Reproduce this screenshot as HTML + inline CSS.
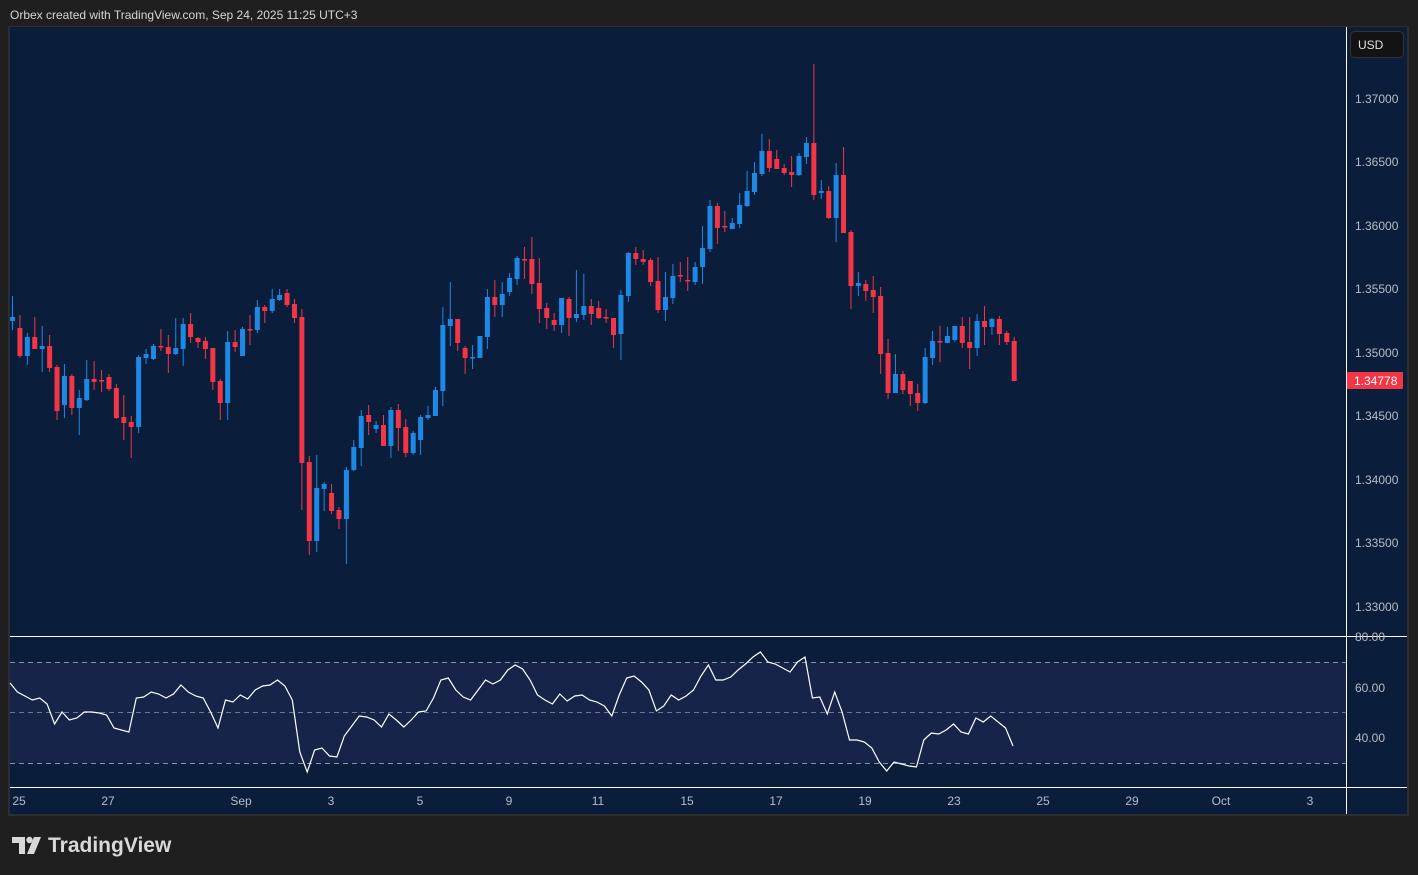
<!DOCTYPE html>
<html><head><meta charset="utf-8"><style>
html,body{margin:0;padding:0;background:#1f1f1f;width:1418px;height:875px;overflow:hidden;font-family:"Liberation Sans",sans-serif}
svg{position:absolute;left:0;top:0}
</style></head><body>
<svg id="s" width="1418" height="875" xmlns="http://www.w3.org/2000/svg">
<rect x="0" y="0" width="1418" height="875" fill="#1f1f1f"/>
<text x="10" y="19" fill="#d6d6d6" font-size="12" font-family="Liberation Sans, sans-serif">Orbex created with TradingView.com, Sep 24, 2025 11:25 UTC+3</text>
<rect x="8" y="26" width="1401" height="790" fill="#2a2d33"/>
<rect x="10" y="27" width="1397" height="787" fill="#0a1e3c"/>
<rect x="10" y="662" width="1336" height="101" fill="#16244a"/>
<line x1="10" y1="662.5" x2="1346" y2="662.5" stroke="#8a94a8" stroke-dasharray="5,4"/>
<line x1="10" y1="712.5" x2="1346" y2="712.5" stroke="#6c7790" stroke-dasharray="5,4"/>
<line x1="10" y1="763.5" x2="1346" y2="763.5" stroke="#8a94a8" stroke-dasharray="5,4"/>
<g id="c"></g>
<polyline id="rsi" fill="none" stroke="#ffffff" stroke-width="1.2" points=""/>
<line x1="10" y1="636.5" x2="1407" y2="636.5" stroke="#fff"/>
<line x1="10" y1="787.5" x2="1407" y2="787.5" stroke="#fff"/>
<line x1="1346.5" y1="27" x2="1346.5" y2="814" stroke="#fff"/>
<g fill="#b8bcc6" font-size="12" font-family="Liberation Sans, sans-serif">
<text x="1355" y="103">1.37000</text><text x="1355" y="166">1.36500</text><text x="1355" y="230">1.36000</text>
<text x="1355" y="293">1.35500</text><text x="1355" y="357">1.35000</text><text x="1355" y="420">1.34500</text>
<text x="1355" y="484">1.34000</text><text x="1355" y="547">1.33500</text><text x="1355" y="611">1.33000</text>
<text x="1355" y="641">80.00</text><text x="1355" y="692">60.00</text><text x="1355" y="742">40.00</text>
</g>
<g fill="#b8bcc6" font-size="12" text-anchor="middle" font-family="Liberation Sans, sans-serif">
<text x="19" y="805">25</text><text x="108" y="805">27</text><text x="241" y="805">Sep</text><text x="331" y="805">3</text>
<text x="420" y="805">5</text><text x="509" y="805">9</text><text x="598" y="805">11</text><text x="687" y="805">15</text>
<text x="776" y="805">17</text><text x="865" y="805">19</text><text x="954" y="805">23</text><text x="1043" y="805">25</text>
<text x="1132" y="805">29</text><text x="1221" y="805">Oct</text><text x="1310" y="805">3</text>
</g>
<rect x="1350.5" y="31.5" width="53" height="26" rx="4" fill="#131313" stroke="#333"/>
<text x="1358" y="49" fill="#e0e0e0" font-size="12" font-family="Liberation Sans, sans-serif">USD</text>
<rect x="1347" y="372" width="56" height="17" rx="1" fill="#f23645"/>
<text x="1354" y="385" fill="#fff" font-size="12" font-family="Liberation Sans, sans-serif">1.34778</text>
<g fill="#d9d9d9">
<path d="M12 837 H25 V854 H19 V843 H12 Z"/>
<circle cx="29.5" cy="840" r="3.2"/>
<path d="M34 837 H41 L34 854 H27 Z"/>
</g>
<text x="48" y="852" fill="#d9d9d9" font-size="21" font-weight="bold" font-family="Liberation Sans, sans-serif">TradingView</text>
</svg>
<script>
var d=[
[317,321,296,330,1],[328,356,315,358,0],[337,356,333,365,1],[337,349,317,349,0],[346,349,326,372,1],[346,368,335,372,0],[367,411,365,420,0],[376,405,364,418,1],[376,408,374,415,0],[398,408,390,435,1],
[379,400,360,401,1],[379,382,361,390,0],[380,381,370,392,0],[377,389,374,391,0],[388,418,384,419,0],[417,423,395,440,0],[422,427,416,458,0],[357,427,355,433,1],[354,358,349,364,1],[346,359,344,360,1],
[346,347,329,351,0],[347,354,335,373,0],[348,354,318,355,1],[324,349,318,366,1],[324,337,313,343,0],[338,342,337,348,0],[341,349,337,359,0],[348,382,348,390,0],[381,403,379,420,0],[342,403,331,420,1],
[342,347,330,352,0],[329,356,327,356,1],[329,330,315,345,0],[307,330,300,333,1],[307,311,305,323,0],[299,311,289,313,1],[295,300,289,301,1],[293,305,289,307,0],[304,318,299,323,0],[317,463,309,510,0],
[462,541,456,555,0],[488,541,455,552,1],[484,489,482,511,1],[493,511,484,514,0],[510,519,507,529,0],[470,519,467,564,1],
[447,470,440,471,1],[416,448,410,466,1],[415,422,405,435,0],[425,429,421,433,1],[425,446,415,446,0],[410,446,407,458,1],[410,428,404,451,0],[427,453,419,457,0],[433,453,431,455,1],[417,440,415,455,1],
[415,418,406,420,1],[390,416,387,416,1],[325,391,307,406,1],[319,326,282,346,1],[319,343,319,351,0],[348,358,346,374,0],[357,358,345,369,1],[336,358,336,358,1],[297,337,289,349,1],[297,305,280,317,0],
[294,305,282,317,1],[278,292,273,296,1],[258,279,256,285,1],[259,260,247,279,0],[259,284,237,294,0],[283,309,258,323,0],[308,318,303,329,0],[320,325,313,331,0],[298,325,298,333,1],[299,318,297,336,0],
[314,318,270,322,1],[306,315,274,320,1],[306,314,299,325,0],[308,318,301,319,0],[317,318,309,323,0],[318,335,318,348,0],[295,334,290,360,1],[253,296,252,302,1],[253,259,247,265,0],[259,262,250,265,0],
[260,282,258,286,0],[281,310,257,313,0],[297,310,272,321,1],[276,298,264,304,1],[275,276,262,282,0],[280,281,257,291,0],
[267,282,262,285,1],[248,267,226,284,1],[206,249,200,252,1],[206,228,203,244,0],[226,227,211,232,0],[223,229,218,229,1],[205,224,193,228,1],[191,206,171,207,1],[173,192,162,195,1],[151,174,134,176,1],
[151,168,139,172,0],[159,169,150,169,0],[168,173,164,175,0],[172,175,156,187,0],[156,175,153,176,1],[143,157,137,164,1],[143,195,64,200,0],[191,193,180,199,1],[191,218,186,219,0],[175,218,163,242,1],
[175,233,147,233,0],[232,286,230,309,0],[283,286,272,296,1],[284,291,280,301,0],[290,297,276,313,0],[296,354,287,374,0],[353,393,339,399,0],[374,393,354,393,1],[374,390,371,394,0],[381,394,381,406,0],
[393,403,384,411,0],[357,403,348,404,1],[341,358,331,365,1],[341,342,326,362,0],[336,343,327,343,1],[326,340,326,342,1],[326,343,317,348,0],[342,348,317,369,0],[321,348,314,356,1],[321,327,306,345,0],
[319,327,318,335,1],[319,334,316,345,0],[333,342,331,345,0],[341,381,337,381,0]];
var h='';
for(var i=0;i<d.length;i++){var x=12.5+i*7.42,c=d[i][4]?'#1e88e5':'#f23645',t=d[i][0],b=d[i][1];if(b-t<1.5)b=t+1.5;
h+='<line x1="'+x+'" y1="'+d[i][2]+'" x2="'+x+'" y2="'+d[i][3]+'" stroke="'+c+'" stroke-width="1"/>';
h+='<rect x="'+(x-2.5)+'" y="'+t+'" width="5" height="'+(b-t)+'" fill="'+c+'"/>';}
document.getElementById('c').innerHTML=h;
var r=[683,692,696,700,698,704,724,712,720,718,712,712,713,715,728,730,732,698,697,692,694,698,694,685,692,696,698,712,728,700,702,695,699,690,686,685,680,686,700,752,772,750,748,756,757,736,726,716,717,720,727,714,720,727,720,712,711,698,680,678,690,697,700,690,680,684,680,670,665,669,680,695,700,704,694,701,696,695,700,702,706,716,695,678,676,682,690,711,706,695,700,696,690,676,665,680,680,677,670,664,657,652,662,664,668,672,662,657,698,697,714,692,712,740,740,742,748,762,771,762,764,766,767,740,733,734,730,724,732,734,718,722,716,722,728,746];
var p=[];var n=r.length;for(var j=0;j<n;j++){p.push((10+j*(1003/(n-1))).toFixed(1)+','+r[j]);}
document.getElementById('rsi').setAttribute('points',p.join(' '));
</script>
</body></html>
